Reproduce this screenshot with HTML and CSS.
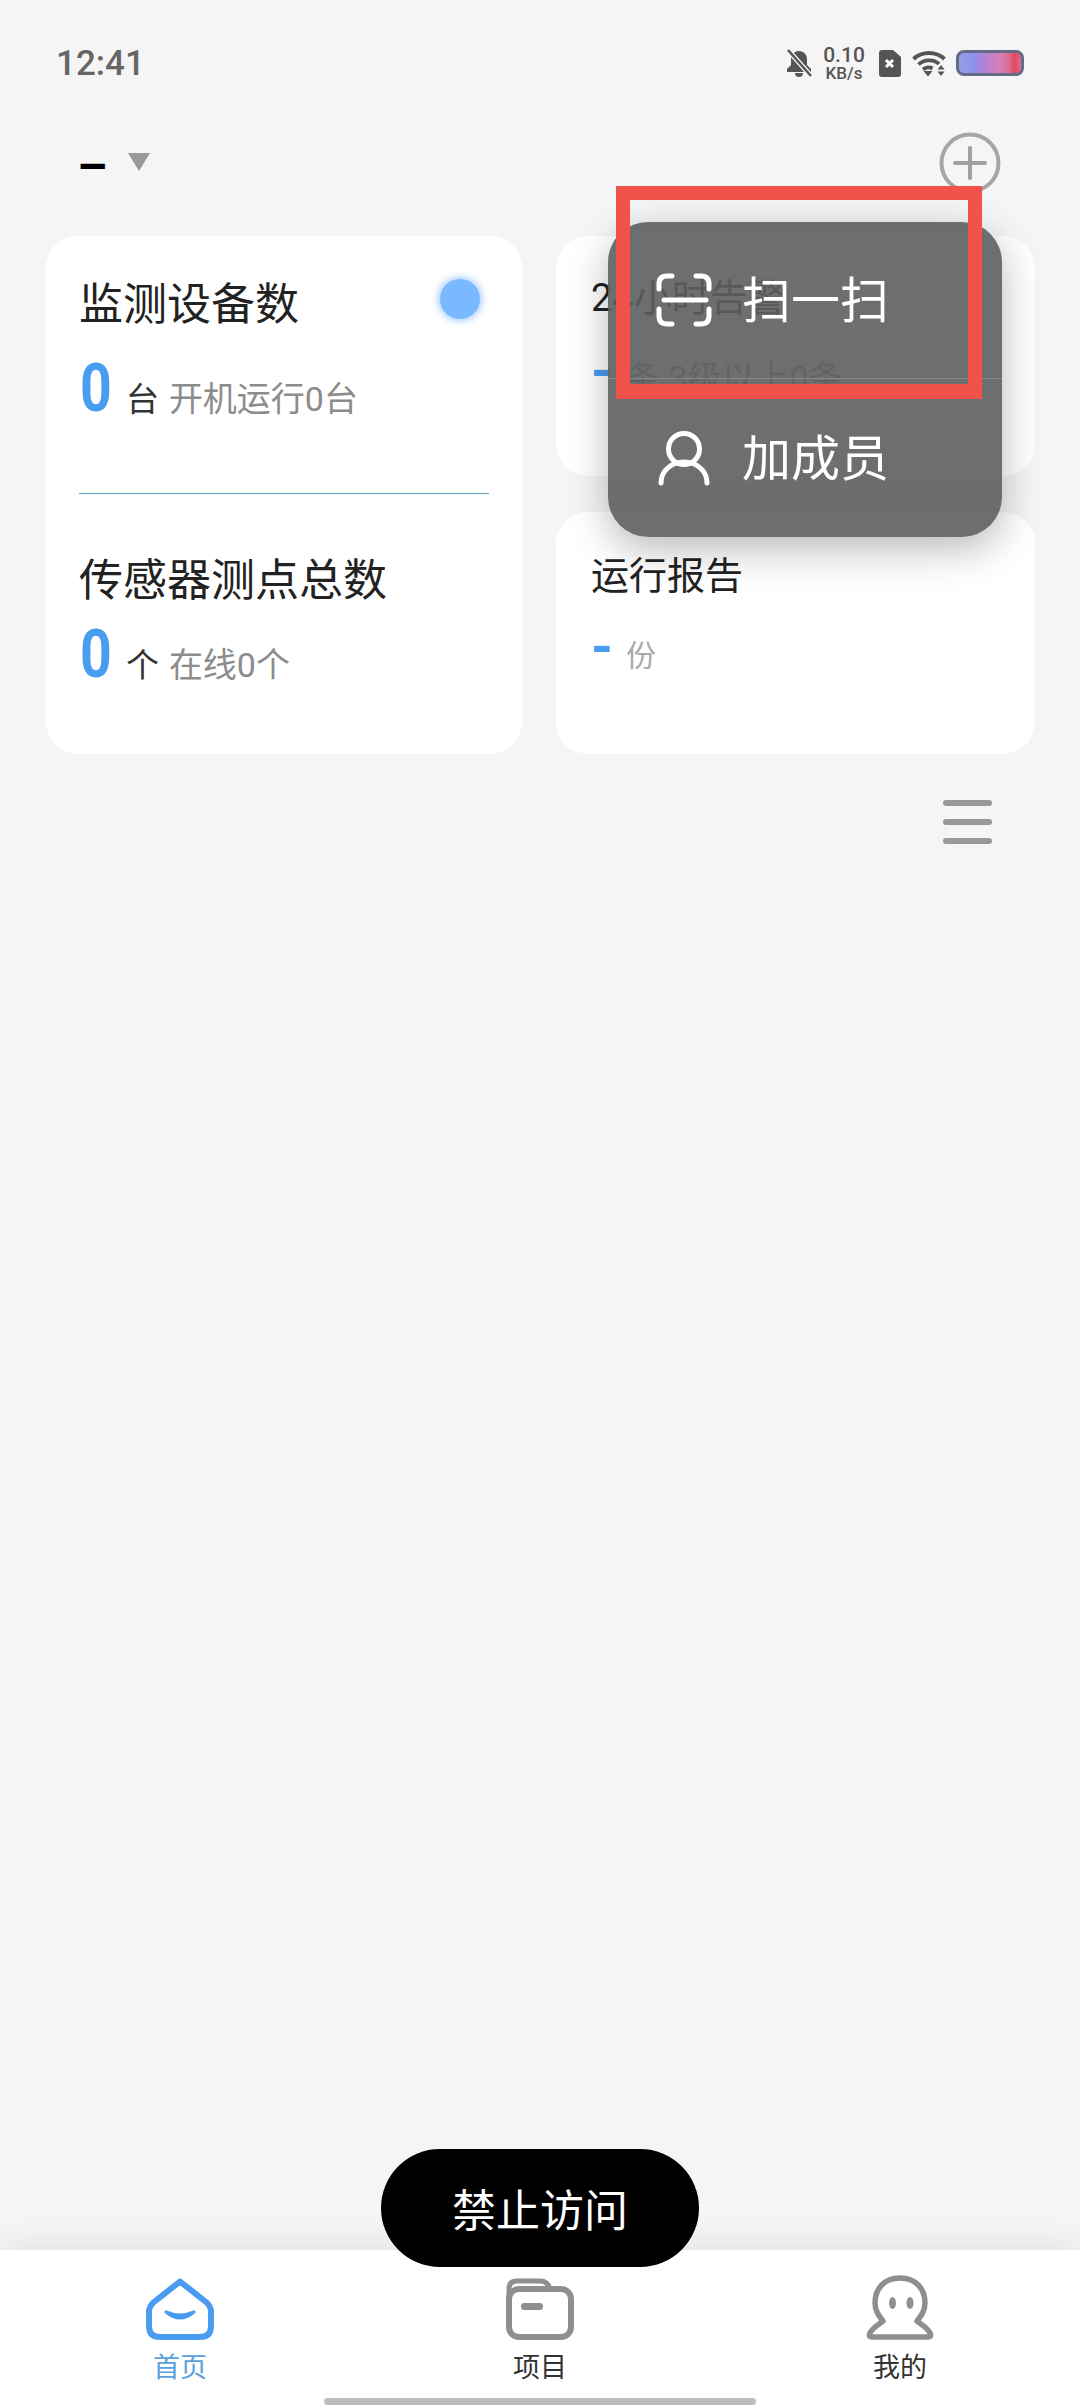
FILE: index.html
```html
<!DOCTYPE html>
<html lang="zh-CN">
<head>
    <meta charset="UTF-8">
    <meta name="viewport" content="width=device-width, initial-scale=1.0">
    <title>首页</title>
    <link rel="stylesheet" href="styles.css">
</head>
<body>
    <div class="status-bar">
        <span class="time">12:41</span>
        <div class="status-icons">
            <svg class="bell" width="26" height="28" viewBox="0 0 26 28">
                <path d="M13 2C8 2 5 6 5 10v6l-4 4v3h24v-3l-4-4v-6c0-4-3-8-8-8zM9 24h8a4 4 0 0 1-8 0z" fill="#555"/>
                <path d="M2 1l23 26" stroke="#f5f5f5" stroke-width="5"/>
                <path d="M2 1l23 26" stroke="#555" stroke-width="2.500"/>
            </svg>
            <div class="speed">
                <span class="speed-num">0.10</span>
                <span class="speed-unit">KB/s</span>
            </div>
            <svg class="sim" width="23" height="27" viewBox="0 0 23 27">
                <path d="M4 0h11l8 7v17a3 3 0 0 1-3 3H4a3 3 0 0 1-3-3V3a3 3 0 0 1 3-3z" fill="#555"/>
                <path d="M8 10l7 7M15 10l-7 7" stroke="#fff" stroke-width="3"/>
            </svg>
            <svg class="wifi" width="34" height="27" viewBox="0 0 34 27">
                <g fill="none" stroke="#555" stroke-width="3.800">
                    <path d="M1.500 9C10 1 24 1 32.500 9"/>
                    <path d="M6.500 14.500C12 9 22 9 27 14"/>
                    <path d="M11 19.500C14 17 18 17 20.500 18.500"/>
                </g>
                <path d="M11.500 21h9l-4.500 5.500z" fill="#555"/>
                <path d="M29 15l3.500 4.500h-7zM29 26l-3.500-4.500h7z" fill="#555"/>
            </svg>
            <div class="battery"></div>
        </div>
    </div>

    <div class="header">
        <div class="project-select">
            <span class="project-name">–</span>
            <svg width="24" height="18" viewBox="0 0 24 18"><path d="M1 0h22L12 18z" fill="#999"/></svg>
        </div>
        <svg class="add-btn" width="62" height="62" viewBox="0 0 62 62">
            <circle cx="31" cy="31" r="28.500" fill="none" stroke="#a5a5a5" stroke-width="4"/>
            <path d="M31 16v30M16 31h30" stroke="#a0a0a0" stroke-width="4" stroke-linecap="round"/>
        </svg>
    </div>

    <div class="cards">
        <div class="card card-main">
            <div class="card-section">
                <div class="title-row">
                    <span class="title">监测设备数</span>
                    <span class="dot"></span>
                </div>
                <div class="value-row value-first">
                    <span class="num">0</span>
                    <span class="unit">台</span>
                    <span class="note">开机运行0台</span>
                </div>
            </div>
            <div class="card-divider"></div>
            <div class="card-section section-second">
                <div class="title-row">
                    <span class="title">传感器测点总数</span>
                </div>
                <div class="value-row">
                    <span class="num">0</span>
                    <span class="unit">个</span>
                    <span class="note">在线0个</span>
                </div>
            </div>
        </div>
        <div class="card card-small">
            <div class="small-title">24小时告警</div>
            <div class="value-row small-row">
                <span class="num num-small">-</span>
                <span class="note">条 3级以上0条</span>
            </div>
        </div>
        <div class="card card-small card-report">
            <div class="small-title">运行报告</div>
            <div class="value-row small-row">
                <span class="num num-small">-</span>
                <span class="note note-light">份</span>
            </div>
        </div>
    </div>

    <div class="menu-row">
        <div class="menu-icon"><span></span><span></span><span></span></div>
    </div>

    <div class="spacer"></div>

    <div class="tabbar">
        <div class="tabs">
            <div class="tab tab-active">
                <svg width="68" height="62" viewBox="0 0 68 62">
                    <path d="M34 3.500L60 24Q65 28 65 34V48Q65 59 54 59H14Q3 59 3 48V34Q3 28 8 24Z" fill="none" stroke="#4a9cf0" stroke-width="6" stroke-linejoin="round"/>
                    <path d="M20 34Q34 46 48 34Q34 40 20 34Z" fill="#4a9cf0" stroke="#4a9cf0" stroke-width="3" stroke-linejoin="round"/>
                </svg>
                <span class="tab-label">首页</span>
            </div>
            <div class="tab">
                <svg width="68" height="62" viewBox="0 0 68 62">
                    <path d="M3 20V11Q3 3 11 3H34Q42 3 44 11" fill="none" stroke="#8f8f8f" stroke-width="5"/>
                    <rect x="3" y="11" width="62" height="48" rx="10" fill="#fff" stroke="#8f8f8f" stroke-width="6"/>
                    <rect x="15" y="25" width="22" height="7" rx="3" fill="#8f8f8f"/>
                </svg>
                <span class="tab-label">项目</span>
            </div>
            <div class="tab">
                <svg width="68" height="65" viewBox="0 0 68 65">
                    <path d="M34 3C18 3 9 14 9 28C9 36 13 41 17 46C12 50 6 53 3.500 59Q2.500 62 6 62H62Q65.500 62 64.500 59C62 53 56 50 51 46C55 41 59 36 59 28C59 14 50 3 34 3Z" fill="none" stroke="#8f8f8f" stroke-width="5.500" stroke-linejoin="round"/>
                    <ellipse cx="26.500" cy="28" rx="3.500" ry="6" fill="#8f8f8f"/>
                    <ellipse cx="44" cy="28" rx="3.500" ry="6" fill="#8f8f8f"/>
                </svg>
                <span class="tab-label">我的</span>
            </div>
        </div>
        <div class="home-bar"></div>
    </div>

    <!-- popup menu, over the cards -->
    <div class="popup">
        <div class="popup-item popup-item-first">
            <svg width="56" height="54" viewBox="0 0 56 54">
                <g fill="none" stroke="#fff" stroke-width="5" stroke-linecap="round">
                    <path d="M16 3H11Q3 3 3 11V16"/>
                    <path d="M40 3H45Q53 3 53 11V16"/>
                    <path d="M3 36V43Q3 51 11 51H16"/>
                    <path d="M53 36V43Q53 51 45 51H40"/>
                    <path d="M8 27H50"/>
                </g>
            </svg>
            <span class="popup-text">扫一扫</span>
        </div>
        <div class="popup-item">
            <svg width="56" height="56" viewBox="0 0 56 56">
                <g fill="none" stroke="#fff" stroke-width="5" stroke-linecap="round">
                    <circle cx="28" cy="19" r="15.500"/>
                    <path d="M5 53C5 41 15 32 28 32C41 32 51 41 51 53"/>
                </g>
            </svg>
            <span class="popup-text">加成员</span>
        </div>
    </div>

    <div class="highlight"></div>

    <div class="toast">禁止访问</div>
</body>
</html>
```

FILE: styles.css
```css
* {
    box-sizing: border-box;
}
html, body {
    margin: 0;
    padding: 0;
}
body {
    position: relative;
    width: 1080px;
    height: 2408px;
    overflow: hidden;
    display: flex;
    flex-direction: column;
    background-color: #f5f5f5;
    font-family: Roboto, "Noto Sans CJK SC", sans-serif;
    color: #222;
}
.status-bar {
    height: 126px;
    padding: 0 56px;
    display: flex;
    align-items: center;
    justify-content: space-between;
}
.time {
    font-size: 35px;
    font-weight: 500;
    color: #666;
}
.status-icons {
    display: flex;
    align-items: center;
}
.bell {
    margin-right: 10px;
}
.speed {
    width: 44px;
    margin-right: 12px;
    display: flex;
    flex-direction: column;
    align-items: center;
    color: #555;
    font-weight: 500;
}
.speed-num {
    font-size: 21px;
    line-height: 20px;
}
.speed-unit {
    font-size: 17px;
    line-height: 16px;
}
.sim {
    margin-right: 11px;
}
.wifi {
    margin-right: 10px;
}
.battery {
    width: 68px;
    height: 26px;
    border: 3px solid #666b85;
    border-radius: 8px;
    background: linear-gradient(90deg, #949ee6, #8e90ee 25%, #b680d2 42%, #d480bb 65%, #dc7092 80%, #e2455f 90%, #d8708a);
}
.header {
    height: 74px;
    margin-bottom: 36px;
    padding: 0 79px 0 77px;
    display: flex;
    align-items: center;
    justify-content: space-between;
}
.project-select {
    display: flex;
    align-items: center;
    margin-top: 8px;
}
.project-name {
    font-size: 48px;
    line-height: 48px;
    font-weight: 700;
    color: #000;
    margin-right: 20px;
}
.project-select svg {
    margin-bottom: 10px;
}
.cards {
    padding-left: 46px;
    display: grid;
    grid-template-columns: 476px 479px;
    grid-template-rows: 240px 242px;
    column-gap: 34px;
    row-gap: 36px;
}
.card {
    background-color: #fff;
    border-radius: 32px;
}
.card-main {
    grid-row: 1 / 3;
    padding: 47px 33px 0;
}
.title-row {
    display: flex;
    align-items: center;
    justify-content: space-between;
}
.title {
    font-size: 44px;
    line-height: 44px;
}
.dot {
    width: 40px;
    height: 40px;
    margin: -12px 9px 0 0;
    border-radius: 50%;
    background-color: #7ab8ff;
    box-shadow: 0 0 6px 3px rgba(122, 184, 255, 0.55);
}
.value-row {
    display: flex;
    align-items: baseline;
    margin-top: 19px;
}
.value-first {
    margin-top: 29px;
}
.num {
    font-size: 66px;
    line-height: 66px;
    font-weight: 700;
    color: #4a9cf0;
    margin: 0 8px 0 1px;
    display: inline-block;
    transform: scaleX(0.84);
    transform-origin: left center;
}
.unit {
    font-size: 33px;
    color: #333;
    margin-right: 10px;
}
.note {
    font-size: 34px;
    color: #8c8c8c;
}
.note-light {
    font-size: 30px;
    color: #aaa;
}
.card-divider {
    height: 1px;
    margin-top: 71px;
    background-color: #5aa0b8;
}
.section-second {
    margin-top: 65px;
}
.card-small {
    padding: 43px 35px 0;
}
.small-title {
    font-size: 38px;
    line-height: 38px;
    height: 38px;
}
.card-report .small-title {
    height: 36px;
    margin-top: 2px;
    overflow: hidden;
}
.small-row {
    margin-top: 26px;
}
.num-small {
    font-size: 56px;
    line-height: 56px;
    margin: 0 13px 0 0;
    transform: none;
}
.menu-row {
    margin-top: 46px;
    padding-right: 88px;
    display: flex;
    justify-content: flex-end;
}
.menu-icon {
    width: 49px;
    display: flex;
    flex-direction: column;
    gap: 13px;
}
.menu-icon span {
    height: 6px;
    border-radius: 3px;
    background-color: #999;
}
.spacer {
    flex: 1;
}
.tabbar {
    height: 158px;
    background-color: #fff;
    box-shadow: 0 -8px 30px rgba(0, 0, 0, 0.07);
    display: flex;
    flex-direction: column;
    align-items: center;
}
.tabs {
    width: 100%;
    height: 148px;
    display: grid;
    grid-template-columns: repeat(3, 1fr);
}
.tab {
    height: 133px;
    display: flex;
    flex-direction: column;
    align-items: center;
    justify-content: flex-end;
    gap: 13px;
}
.tab-label {
    font-size: 27px;
    line-height: 30px;
    color: #333;
}
.tab-active .tab-label {
    color: #5a9fdc;
}
.home-bar {
    width: 432px;
    height: 7px;
    border-radius: 4px;
    background-color: #bdbdbd;
}
.popup {
    position: absolute;
    left: 608px;
    top: 222px;
    width: 394px;
    height: 315px;
    border-radius: 40px;
    background-color: rgba(94, 94, 94, 0.9);
    box-shadow: 0 12px 40px rgba(0, 0, 0, 0.28);
    display: flex;
    flex-direction: column;
    color: #fff;
    font-size: 49px;
}
.popup-item {
    flex: 1;
    padding-left: 48px;
    display: flex;
    align-items: center;
    gap: 30px;
}
.popup-item-first {
    flex: none;
    height: 157px;
    border-bottom: 1px solid #888;
}
.popup-text {
    margin-top: -7px;
}
.highlight {
    position: absolute;
    left: 616px;
    top: 186px;
    width: 366px;
    height: 213px;
    border: 14px solid #f1534a;
    border-bottom-width: 15px;
}
.toast {
    position: absolute;
    left: 381px;
    top: 2149px;
    width: 318px;
    height: 118px;
    border-radius: 59px;
    background-color: #000;
    color: #fff;
    font-size: 44px;
    display: flex;
    align-items: center;
    justify-content: center;
}
```
